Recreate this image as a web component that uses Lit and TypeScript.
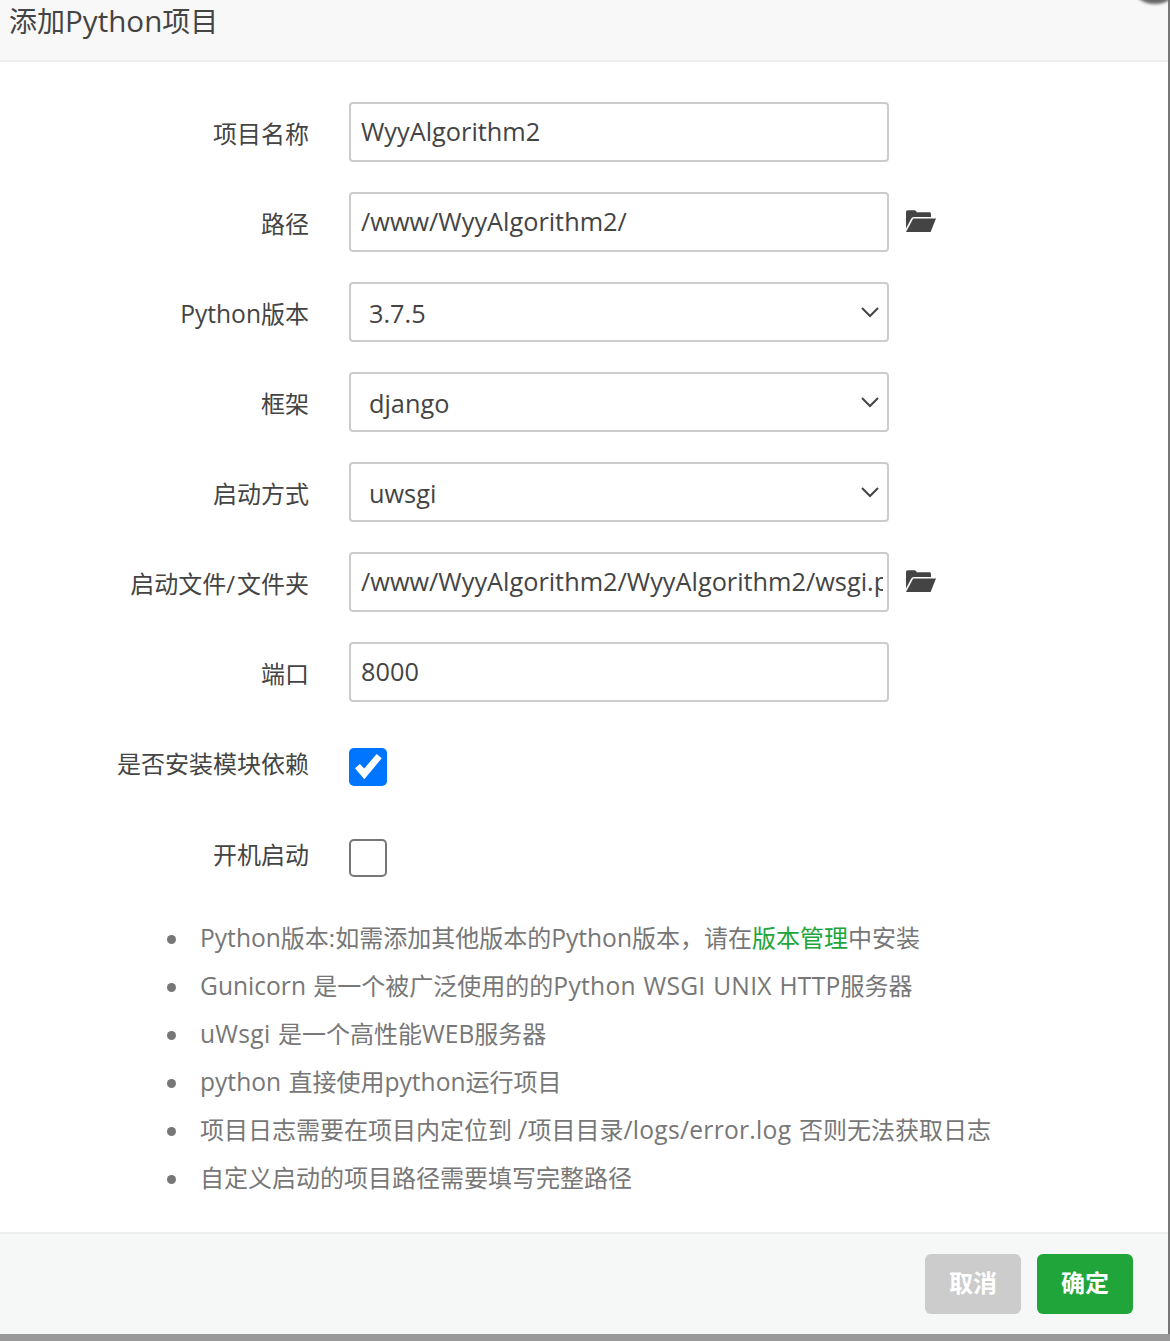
import { LitElement, html, css } from "lit";
import { customElement } from "lit/decorators.js";

const folder = html`<svg class="folder" viewBox="0 0 30 22" aria-hidden="true"><path d="M0 2.2C0 1 .8.2 2 .2h6.2c1 0 1.6.4 2 1.1l.5.9h12.6c1 0 1.7.7 1.7 1.7V7H8.2c-1.6 0-2.6.7-3.2 2L0 18.5z"/><path d="M7.2 8.4H30L24.6 22H0z"/></svg>`;

@customElement("app-root")
export class AppRoot extends LitElement {
  static styles = css`
    :host { display: block; width: 1170px; height: 1341px; overflow: hidden; position: relative; background: #fff;
      font-family: "Open Sans", "Noto Sans CJK SC", sans-serif; color: #444; }
    * { box-sizing: border-box; }
    .dialog { width: 1168px; height: 1334px; background: #fff; display: flex; flex-direction: column; }
    .edge { position: absolute; right: 0; top: 0; width: 2px; height: 1334px; background: #777; }
    .base { height: 7px; background: #999; }
    .blob { position: absolute; right: -8px; top: -32px; width: 46px; height: 36px; border-radius: 50%; background: #666; filter: blur(1.5px); }
    header { height: 62px; flex: none; background: #f8f8f8; border-bottom: 2px solid #eee; font-size: 28px; line-height: 42px; padding-left: 9px; }
    .form { flex: 1; padding: 40px 0 0; display: flex; flex-direction: column; }
    .row { display: flex; align-items: center; height: 60px; margin-bottom: 30px; }
    .row label { width: 309px; text-align: right; font-size: 24px; margin-right: 40px; flex: none; position: relative; top: 0; }
    input[type="text"], select { width: 540px; height: 60px; flex: none; border: 2px solid #ccc; border-radius: 4px; background: #fff; color: #444;
      font: 25.3px "Open Sans", "Noto Sans CJK SC", sans-serif; outline: none; }
    input[type="text"] { padding: 0 4px 2px 10px; }
    select { appearance: none; padding: 2px 18px 0; }
    .sel { position: relative; display: block; width: 540px; height: 60px; }
    .chev { position: absolute; right: 9px; top: 24px; width: 20px; height: 12px; fill: none; stroke: #444; stroke-width: 2; }
    .folder { width: 30px; height: 22px; margin: 0 0 2px 17px; fill: #444; flex: none; }
    .check { width: 38px; height: 38px; border-radius: 5px; flex: none; display: block; }
    .check.on { background: #0075ff; }
    .check.off { border: 2px solid #767676; background: #fff; }
    .check svg { display: block; width: 38px; height: 38px; fill: #fff; }
    .row.c { height: 70px; margin-bottom: 21px; }
    .row.c label { top: -5px; }
    ul { margin: 0; padding: 0 0 0 200px; list-style: none; font-size: 24px; color: #777; }
    li { height: 48px; line-height: 48px; position: relative; white-space: nowrap; }
    li::before { content: ""; position: absolute; left: -33px; top: 21px; width: 9px; height: 9px; border-radius: 50%; background: #777; }
    a { color: #20a53a; text-decoration: none; }
    .l { font-size: 24.6px; word-spacing: 1px; }
    .w { letter-spacing: .27px; }
    header .l { font-size: 29.6px; }
    .s { margin-right: 2px; }
    footer { height: 102px; flex: none; background: #f6f8f8; border-top: 2px solid #eee; display: flex; justify-content: flex-end; gap: 16px; padding: 20px 35px 0 0; }
    button { width: 96px; height: 60px; border: 0; border-radius: 6px; color: #fff; font: bold 24px "Noto Sans CJK SC", sans-serif; padding: 0 0 6px; }
    .cancel { background: #ccc; }
    .ok { background: #20a53a; }
  `;

  private input(label: unknown, value: string, withFolder = false) {
    return html`<div class="row"><label>${label}</label><input type="text" .value=${value} />${withFolder ? folder : ""}</div>`;
  }
  private select(label: unknown, value: string) {
    return html`<div class="row"><label>${label}</label><span class="sel"><select><option>${value}</option></select>
      <svg class="chev" viewBox="0 0 20 12"><path d="M2 2l8 8 8-8"/></svg></span></div>`;
  }

  render() {
    return html`
      <div class="dialog">
        <header>添加<span class="l">Python</span>项目</header>
        <div class="form">
          ${this.input("项目名称", "WyyAlgorithm2")}
          ${this.input("路径", "/www/WyyAlgorithm2/", true)}
          ${this.select(html`<span class="l">Python</span>版本`, "3.7.5")}
          ${this.select("框架", "django")}
          ${this.select("启动方式", "uwsgi")}
          ${this.input(html`启动文件<span class="s">/</span>文件夹`, "/www/WyyAlgorithm2/WyyAlgorithm2/wsgi.py", true)}
          ${this.input("端口", "8000")}
          <div class="row c"><label>是否安装模块依赖</label><span class="check on"><svg viewBox="0 0 38 38"><path d="M6 20.3L10.8 16l4.5 4.4L27.7 6l5 4.3-17.4 21z"/></svg></span></div>
          <div class="row c"><label>开机启动</label><span class="check off"></span></div>
          <ul>
            <li><span class="l">Python</span>版本:如需添加其他版本的<span class="l">Python</span>版本，请在<a>版本管理</a>中安装</li>
            <li><span class="l">Gunicorn </span>是一个被广泛使用的的<span class="l w">Python WSGI UNIX HTTP</span>服务器</li>
            <li><span class="l w">uWsgi </span>是一个高性能<span class="l">WEB</span>服务器</li>
            <li><span class="l">python </span>直接使用<span class="l">python</span>运行项目</li>
            <li>项目日志需要在项目内定位到 <span class="l w">/</span>项目目录<span class="l w">/logs/error.log </span>否则无法获取日志</li>
            <li>自定义启动的项目路径需要填写完整路径</li>
          </ul>
        </div>
        <footer><button class="cancel">取消</button><button class="ok">确定</button></footer>
      </div>
      <div class="base"></div>
      <div class="edge"></div>
      <div class="blob"></div>
    `;
  }
}
